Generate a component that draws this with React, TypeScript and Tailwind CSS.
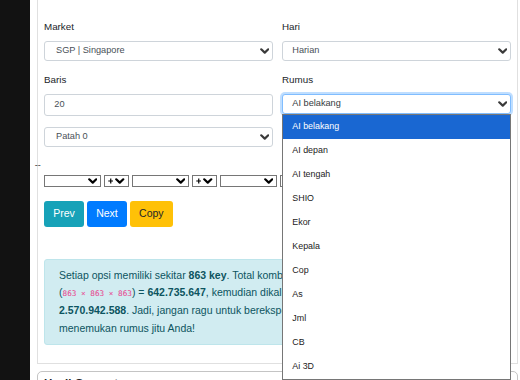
import React from "react";

const Chevron = ({ color = "#3a3a3a" }: { color?: string }) => (
  <svg width="9.5" height="6" viewBox="0 0 10 6" className="shrink-0">
    <path d="M1.3 1.2 L5 4.7 L8.7 1.2" fill="none" stroke={color} strokeWidth="2.3" strokeLinecap="round" strokeLinejoin="round" />
  </svg>
);

const Plus = () => (
  <svg width="5.5" height="6" viewBox="0 0 6 6" className="shrink-0">
    <path d="M3 0.3 V5.7 M0.3 3 H5.7" fill="none" stroke="#000" strokeWidth="1.3" />
  </svg>
);

const BigSelect = ({ text, wide }: { text: string; wide?: boolean }) => (
  <div
    className={
      wide
        ? "flex h-[20px] items-center justify-between rounded-[3px] border border-[#ced4da] bg-white pl-[11px] pr-[3px] text-[9.2px] text-[#495057]"
        : "flex h-[20px] items-center justify-between rounded-[3px] border border-[#ced4da] bg-white pl-[9.3px] pr-[3px] text-[9.2px] text-[#495057]"
    }
  >
    <span className="whitespace-nowrap">{text}</span>
    <Chevron />
  </div>
);

const Label = ({ children }: { children: React.ReactNode }) => (
  <div className="mb-[6.5px] h-[15px] text-[9.8px] leading-[15px] text-[#212529]">{children}</div>
);

const SmallSel = () => (
  <div className="flex h-[12.3px] w-[56.7px] shrink-0 items-center justify-end border border-[#767676] bg-white pr-[2.4px]">
    <Chevron color="#000" />
  </div>
);

const OpSel = () => (
  <div className="flex h-[12.3px] w-[24.7px] shrink-0 items-center justify-between border border-[#767676] bg-white pl-[2.7px] pr-[2.7px]">
    <Plus />
    <Chevron color="#000" />
  </div>
);

const options = [
  "AI belakang",
  "AI depan",
  "AI tengah",
  "SHIO",
  "Ekor",
  "Kepala",
  "Cop",
  "As",
  "Jml",
  "CB",
  "Ai 3D",
];

export default function App() {
  return (
    <div className="relative flex h-[380px] w-[520px] overflow-hidden bg-white font-['Liberation_Sans',Arial,sans-serif]">
      <div className="h-full w-[30px] shrink-0 bg-[#121212]" />
      <div className="ml-[7px] flex w-[481px] shrink-0 flex-col">
        {/* Card 1 */}
        <div className="border-x border-b border-[#e0e0e0] px-[6px] pt-[19px] pb-[17.4px]">
          <div className="grid grid-cols-2 gap-x-[9px]">
            <div>
              <Label>Market</Label>
              <BigSelect text="SGP | Singapore" wide />
            </div>
            <div>
              <Label>Hari</Label>
              <BigSelect text="Harian" />
            </div>
            <div className="mt-[11.6px]">
              <Label>Baris</Label>
              <div className="flex h-[22px] items-center rounded-[3px] border border-[#ced4da] bg-white pl-[9.3px] text-[9.2px] text-[#495057]">
                20
              </div>
            </div>
            <div className="mt-[11.6px]">
              <Label>Rumus</Label>
              <div className="relative">
                <div className="flex h-[20px] items-center justify-between rounded-[3px] border border-[#80bdff] bg-white pl-[9.3px] pr-[3px] text-[9.2px] text-[#343a40] shadow-[0_0_0_2px_rgba(0,123,255,0.25)]">
                  <span className="whitespace-nowrap">AI belakang</span>
                  <Chevron />
                </div>
                <div className="absolute left-0 top-full z-10 w-full border border-[#767676] bg-white">
                  {options.map((o, i) => (
                    <div
                      key={o}
                      className={
                        i === 0
                          ? "flex h-[24px] items-center bg-[#1967d2] pl-[9.3px] text-[8.9px] text-white"
                          : "flex h-[24px] items-center pl-[9.3px] text-[8.9px] text-[#222]"
                      }
                    >
                      {o}
                    </div>
                  ))}
                </div>
              </div>
            </div>
            <div className="mt-[11.7px]">
              <BigSelect text="Patah 0" wide />
            </div>
          </div>

          <div className="ml-[-9.3px] mt-[14px] h-[9px] text-[9px] leading-[9px] text-[#333]">--</div>

          <div className="mt-[4.7px] flex gap-[3.3px]">
            <SmallSel />
            <OpSel />
            <SmallSel />
            <OpSel />
            <SmallSel />
            <OpSel />
            <SmallSel />
          </div>

          <div className="mt-[13.7px] flex gap-[3.3px]">
            <button className="h-[25.7px] w-[40px] rounded-[3px] bg-[#17a2b8] text-[10.5px] text-white">Prev</button>
            <button className="h-[25.7px] w-[39.4px] rounded-[3px] bg-[#007bff] text-[10.5px] text-white">Next</button>
            <button className="h-[25.7px] w-[42.7px] rounded-[3px] bg-[#ffc107] text-[10.5px] text-[#212529]">Copy</button>
          </div>

          <div className="mt-[32.6px] rounded-[3px] border border-[#bee5eb] bg-[#d1ecf1] px-[14px] pt-[6.5px] pb-[7.5px] text-[10.5px] leading-[17.3px] text-[#0c5460]">
            <div className="whitespace-nowrap">
              Setiap opsi memiliki sekitar <b>863 key</b>. Total kombinasi dari 3 opsi
            </div>
            <div className="whitespace-nowrap">
              (<code className="font-['DejaVu_Sans_Mono',monospace] text-[7.7px] text-[#e83e8c]">863 × 863 × 863</code>) ={" "}
              <b>642.735.647</b>, kemudian dikalikan 4 rumus menjadi
            </div>
            <div className="whitespace-nowrap">
              <b>2.570.942.588</b>. Jadi, jangan ragu untuk bereksperimen dan
            </div>
            <div className="whitespace-nowrap">menemukan rumus jitu Anda!</div>
          </div>
        </div>

        {/* Card 2 */}
        <div className="mt-[7.3px] rounded-[5px] border border-[#c4c4c4] bg-white pl-[6px] pt-[3.5px]">
          <div className="h-[40px] text-[11.5px] font-bold leading-[15px] text-[#212529]">Hasil Generate</div>
        </div>
      </div>
    </div>
  );
}
